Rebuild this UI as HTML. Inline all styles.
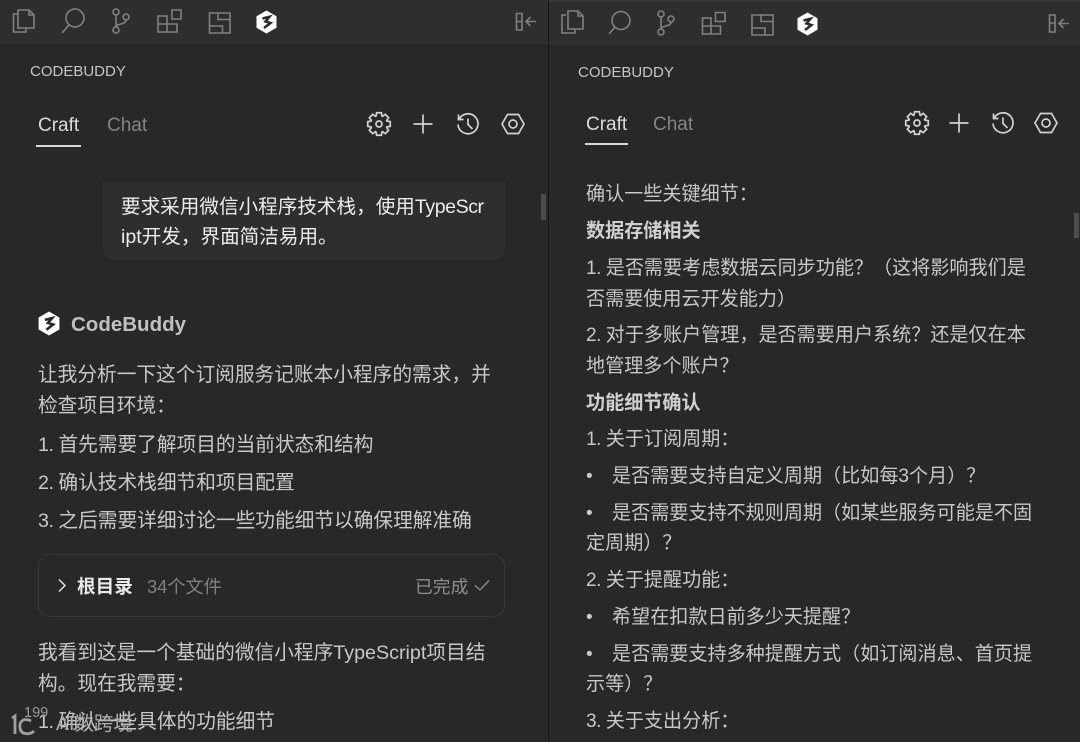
<!DOCTYPE html>
<html><head><meta charset="utf-8"><style>
html,body{margin:0;padding:0;background:#282828}
#p{position:relative;width:1080px;height:742px;overflow:hidden;background:#282828;font-family:"Liberation Sans","Noto Sans CJK SC",sans-serif;color:#c8c8c8}
.t{position:absolute;white-space:nowrap;line-height:28px;height:28px}
.l{font-size:19.7px;left:38px}
.r{font-size:19.1px;left:586px}
.b{font-weight:700;color:#d0d0d0}
.n{letter-spacing:-.5px}
.bar{position:absolute;top:0;height:44px;background:#2e2e2e}
svg{position:absolute;overflow:visible}
svg.i{fill:none;stroke:#808080;stroke-width:1.6}
svg.w{fill:none;stroke:#d2d2d2;stroke-width:1.7}
</style></head><body><div id="p">
<div class="bar" style="left:0;width:548px"></div>
<div class="bar" style="left:549px;width:531px;border-top:1px solid #3c3c3c;box-sizing:border-box;height:45px"></div>
<div style="position:absolute;left:548px;top:0;width:1px;height:742px;background:#171717"></div>

<!-- activity icons -->
<svg class="i" style="left:0;top:0" width="1080" height="44">
<path d="M18 14H13.500V32H26V28M18 10H29L34 15V28H18Z"/><path d="M29 10V15H34"/>
<circle cx="75" cy="18" r="9"/><path d="M69 25L62 33"/>
<circle cx="116" cy="12" r="3"/><circle cx="116" cy="30" r="3"/><circle cx="126" cy="17" r="3"/><path d="M116 15V27M126 20C126 25 117 23 116 27"/>
<path d="M158 16H167V32H158ZM158 24H177V32H167V16M172 10H181V19H172Z"/>
<path d="M209.500 13H230V33H209.500ZM218 13V19.500H230M209.500 26H222.500V33"/>
<path d="M516.500 13.500H522V30H516.500ZM516.500 21.500H522"/><path d="M526 21.500H536M530.500 17L526 21.500L530.500 26"/>

<path d="M566 15H562V33H575V29M568 11H578L583 16V29H568Z"/><path d="M578 11V16H583"/>
<circle cx="621" cy="20.500" r="9"/><path d="M615 27L609 34"/>
<circle cx="661" cy="14" r="3"/><circle cx="661" cy="32" r="3"/><circle cx="671" cy="19" r="3"/><path d="M661 17V29M671 22C671 27 662 25 661 29"/>
<path d="M702.500 18H711V34H702.500ZM702.500 26H720.500V34H711V18M715.500 12.500H725V21.500H715.500Z"/>
<path d="M752 15H773V35H752ZM761 15V21.500H773M752 28H765V35"/>
<path d="M1049.500 15H1055V32H1049.500ZM1049.500 23H1055"/><path d="M1059 23.500H1069M1063.500 19L1059 23.500L1063.500 28"/>
</svg>
<svg style="left:256px;top:10px" width="21" height="24" viewBox="0 0 21 24"><path d="M10.500 1L20 6.500V17.500L10.500 23L1 17.500V6.500Z" fill="#fff" stroke="#fff" stroke-linejoin="round"/><path d="M6.500 8.500L13.500 6.800L9.500 11.500L14.500 13L8 18" fill="none" stroke="#2a2a2a" stroke-width="2.500"/></svg>
<svg style="left:797px;top:12px" width="21" height="24" viewBox="0 0 21 24"><path d="M10.500 1L20 6.500V17.500L10.500 23L1 17.500V6.500Z" fill="#fff" stroke="#fff" stroke-linejoin="round"/><path d="M6.500 8.500L13.500 6.800L9.500 11.500L14.500 13L8 18" fill="none" stroke="#2a2a2a" stroke-width="2.500"/></svg>

<div class="t" style="left:30px;top:58px;font-size:15px;color:#c6c6c6">CODEBUDDY</div>
<div class="t" style="left:578px;top:59px;font-size:15px;color:#c6c6c6">CODEBUDDY</div>

<div class="t" style="left:38px;top:112px;font-size:19px;color:#dcdcdc">Craft</div>
<div class="t" style="left:107px;top:112px;font-size:19px;color:#858585">Chat</div>
<div style="position:absolute;left:36px;top:145px;width:45px;height:2px;background:#d8d8d8"></div>
<div class="t" style="left:586px;top:111px;font-size:19px;color:#dcdcdc">Craft</div>
<div class="t" style="left:653px;top:111px;font-size:19px;color:#858585">Chat</div>
<div style="position:absolute;left:585px;top:143px;width:43px;height:2px;background:#d8d8d8"></div>

<!-- toolbar icons -->
<svg class="w" style="left:367px;top:112px" width="24" height="24" viewBox="0 0 24 24"><path d="M9.100 4L9.600 .750H14.400L14.900 4L15.600 4.300L18.260 2.360L21.640 5.740L19.700 8.400L20 9.100L23.250 9.600V14.400L20 14.900L19.700 15.600L21.640 18.260L18.260 21.640L15.600 19.700L14.900 20L14.400 23.250H9.600L9.100 20L8.400 19.700L5.740 21.640L2.360 18.260L4.300 15.600L4 14.900L.750 14.400V9.600L4 9.100L4.300 8.400L2.360 5.740L5.740 2.360L8.400 4.300Z"/><circle cx="12" cy="12" r="3"/></svg>
<svg class="w" style="left:412px;top:113px" width="22" height="22"><path d="M11 1.500V20.500M1.500 11H20.500"/></svg>
<svg class="w" style="left:456px;top:112px" width="24" height="24" viewBox="0 0 24 24"><path d="M3.200 7A10 10 0 1 1 2 12.500M2.500 2.500V7.500H7.500M12 6.500V12.500L16.500 17"/></svg>
<svg class="w" style="left:501px;top:112px" width="24" height="24" viewBox="0 0 24 24"><path d="M6.500 2.500H17.500L23 12L17.500 21.500H6.500L1 12Z"/><circle cx="12" cy="12" r="4"/></svg>
<svg class="w" style="left:905px;top:111px" width="24" height="24" viewBox="0 0 24 24"><path d="M9.100 4L9.600 .750H14.400L14.900 4L15.600 4.300L18.260 2.360L21.640 5.740L19.700 8.400L20 9.100L23.250 9.600V14.400L20 14.900L19.700 15.600L21.640 18.260L18.260 21.640L15.600 19.700L14.900 20L14.400 23.250H9.600L9.100 20L8.400 19.700L5.740 21.640L2.360 18.260L4.300 15.600L4 14.900L.750 14.400V9.600L4 9.100L4.300 8.400L2.360 5.740L5.740 2.360L8.400 4.300Z"/><circle cx="12" cy="12" r="3"/></svg>
<svg class="w" style="left:948px;top:112px" width="22" height="22"><path d="M11 1.500V20.500M1.500 11H20.500"/></svg>
<svg class="w" style="left:991px;top:111px" width="24" height="24" viewBox="0 0 24 24"><path d="M3.200 7A10 10 0 1 1 2 12.500M2.500 2.500V7.500H7.500M12 6.500V12.500L16.500 17"/></svg>
<svg class="w" style="left:1034px;top:111px" width="24" height="24" viewBox="0 0 24 24"><path d="M6.500 2.500H17.500L23 12L17.500 21.500H6.500L1 12Z"/><circle cx="12" cy="12" r="4"/></svg>

<!-- left panel -->
<div style="position:absolute;left:103px;top:182px;width:402px;height:78px;background:#2e2e2e;border-radius:0 0 12px 12px"></div>
<div class="t" style="left:121px;top:193px;font-size:19.600px;color:#ececec">要求采用微信小程序技术栈，使用<span style="letter-spacing:-.45px">TypeScr</span></div>
<div class="t" style="left:121px;top:223px;font-size:19.600px;color:#ececec">ipt开发，界面简洁易用。</div>
<div style="position:absolute;left:541px;top:194px;width:5px;height:26px;background:#4c4c4c"></div>
<svg style="left:38px;top:311px" width="22" height="25" viewBox="0 0 21 24"><path d="M10.500 1L20 6.500V17.500L10.500 23L1 17.500V6.500Z" fill="#fff" stroke="#fff" stroke-linejoin="round"/><path d="M6.500 8.500L13.500 6.800L9.500 11.500L14.500 13L8 18" fill="none" stroke="#282828" stroke-width="2.500"/></svg>
<div class="t b" style="left:71px;top:311px;font-size:20.500px;color:#c0c0c0">CodeBuddy</div>

<div class="t l" style="top:361px">让我分析一下这个订阅服务记账本小程序的需求，并</div>
<div class="t l" style="top:392px">检查项目环境：</div>
<div class="t l" style="top:431px"><span class="n">1. </span>首先需要了解项目的当前状态和结构</div>
<div class="t l" style="top:469px"><span class="n">2. </span>确认技术栈细节和项目配置</div>
<div class="t l" style="top:507px"><span class="n">3. </span>之后需要详细讨论一些功能细节以确保理解准确</div>

<div style="position:absolute;left:38px;top:554px;width:465px;height:61px;border:1.500px solid #383838;border-radius:12px"></div>
<svg style="left:57px;top:578px;fill:none;stroke:#e0e0e0;stroke-width:1.500" width="10" height="16"><path d="M2 1.500L8 7.500L2 13.500"/></svg>
<div class="t" style="left:77px;top:573px;font-size:18.600px;font-weight:700;color:#eaeaea">根目录</div>
<div class="t" style="left:147px;top:573px;font-size:18.200px;color:#808080">34个文件</div>
<div class="t" style="left:415px;top:573px;font-size:17.800px;color:#8e8e8e">已完成</div>
<svg style="left:474px;top:579px;fill:none;stroke:#8c8c8c;stroke-width:1.300" width="16" height="13"><path d="M1 6.500L6 11L15 1.500"/></svg>

<div class="t l" style="top:639px">我看到这是一个基础的微信小程序TypeScript项目结</div>
<div class="t l" style="top:670px">构。现在我需要：</div>
<div class="t l" style="top:708px"><span class="n">1. </span>确认一些具体的功能细节</div>

<!-- watermark -->
<svg style="left:9px;top:708px;fill:none;stroke:#a0a0a0;stroke-width:2.800" width="50" height="30"><path d="M3 10L6 8V26M22 13C14 9 10 14 11 20C12 27 21 27 25 23"/></svg>
<div class="t" style="left:24px;top:699px;font-size:14.500px;color:#9c9c9c">199</div>
<div class="t" style="left:56px;top:710px;font-size:19.500px;color:#b0b0b0">AI数跨境</div>

<!-- right panel -->
<div style="position:absolute;left:1074px;top:213px;width:5px;height:25px;background:#4c4c4c"></div>
<div class="t r" style="top:181px">确认一些关键细节：</div>
<div class="t r b" style="top:218px">数据存储相关</div>
<div class="t r" style="top:255px"><span class="n">1. </span>是否需要考虑数据云同步功能？（这将影响我们是</div>
<div class="t r" style="top:286px">否需要使用云开发能力）</div>
<div class="t r" style="top:322px"><span class="n">2. </span>对于多账户管理，是否需要用户系统？还是仅在本</div>
<div class="t r" style="top:353px">地管理多个账户？</div>
<div class="t r b" style="top:390px">功能细节确认</div>
<div class="t r" style="top:426px"><span class="n">1. </span>关于订阅周期：</div>
<div class="t r" style="top:463px">•<span style="position:absolute;left:26px">是否需要支持自定义周期（比如每3个月）？</span></div>
<div class="t r" style="top:500px">•<span style="position:absolute;left:26px">是否需要支持不规则周期（如某些服务可能是不固</span></div>
<div class="t r" style="top:530px">定周期）？</div>
<div class="t r" style="top:567px"><span class="n">2. </span>关于提醒功能：</div>
<div class="t r" style="top:604px">•<span style="position:absolute;left:26px">希望在扣款日前多少天提醒？</span></div>
<div class="t r" style="top:641px">•<span style="position:absolute;left:26px">是否需要支持多种提醒方式（如订阅消息、首页提</span></div>
<div class="t r" style="top:671px">示等）？</div>
<div class="t r" style="top:708px"><span class="n">3. </span>关于支出分析：</div>
</div></body></html>
